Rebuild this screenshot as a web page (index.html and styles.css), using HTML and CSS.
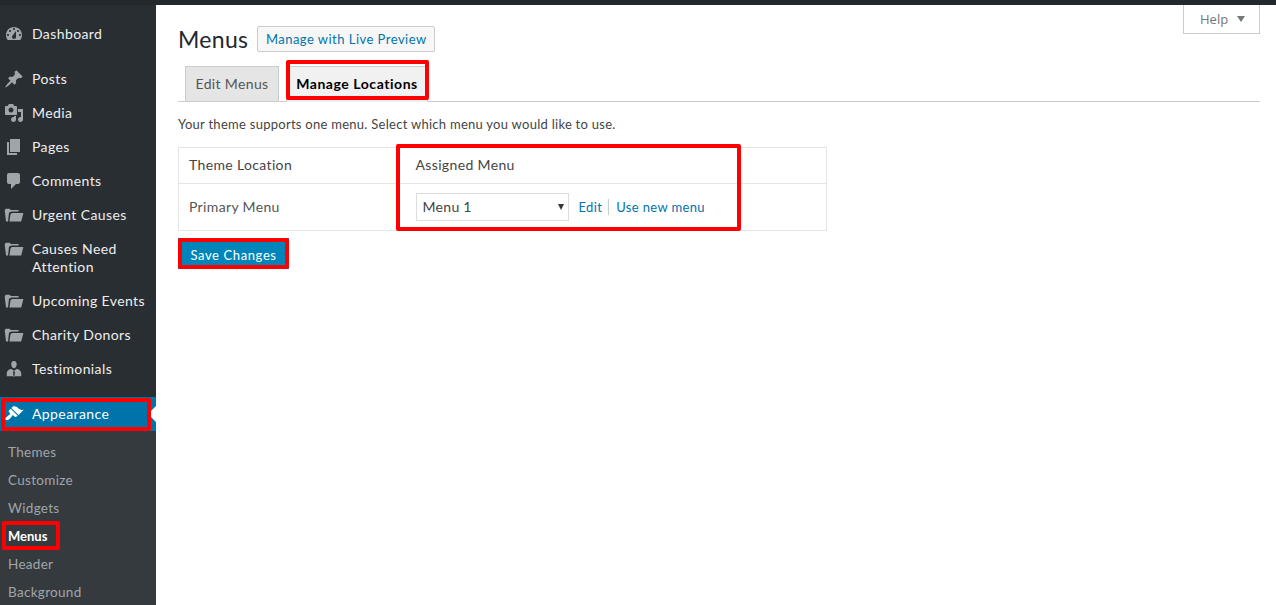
FILE: index.html
```html
<!DOCTYPE html>
<html lang="en">
<head>
<meta charset="utf-8">
<title>Menus</title>
<link rel="stylesheet" href="styles.css">
</head>
<body>
<div class="topbar"></div>
<div class="app">
  <nav class="sidebar">
    <ul class="menu">
      <li class="item"><svg class="icon" viewBox="0 0 20 20"><path d="M3.76 16h12.48c1.1-1.37 1.76-3.11 1.76-5 0-4.42-3.58-8-8-8s-8 3.58-8 8c0 1.89.66 3.63 1.76 5zM10 4c.55 0 1 .45 1 1s-.45 1-1 1-1-.45-1-1 .45-1 1-1zM6 6c.55 0 1 .45 1 1s-.45 1-1 1-1-.45-1-1 .45-1 1-1zm8 0c.55 0 1 .45 1 1s-.45 1-1 1-1-.45-1-1 .45-1 1-1zm-5.37 5.55L12 7v6c0 1.1-.9 2-2 2s-2-.9-2-2c0-.57.24-1.08.63-1.45zM4 10c.55 0 1 .45 1 1s-.45 1-1 1-1-.45-1-1 .45-1 1-1zm12 0c.55 0 1 .45 1 1s-.45 1-1 1-1-.45-1-1 .45-1 1-1z" fill-rule="evenodd"/></svg><span>Dashboard</span></li>
      <li class="sep"></li>
      <li class="item"><svg class="icon" viewBox="0 0 20 20"><path d="M10.44 3.02l1.82-1.82 6.36 6.35-1.83 1.82c-1.05-.68-2.48-.57-3.41.36l-.75.75c-.92.93-1.04 2.35-.35 3.41l-1.83 1.82-2.41-2.41-2.8 2.79c-.42.42-3.38 2.71-3.8 2.29s1.86-3.39 2.28-3.81l2.79-2.79L4.1 9.36l1.83-1.82c1.05.69 2.48.57 3.4-.36l.75-.75c.93-.92 1.05-2.35.36-3.41z"/></svg><span>Posts</span></li>
      <li class="item"><svg class="icon" viewBox="0 0 20 20"><path d="M13 11V4c0-.55-.45-1-1-1h-1.67L9 1H5L3.67 3H2c-.55 0-1 .45-1 1v7c0 .55.45 1 1 1h10c.55 0 1-.45 1-1zM7 4.5c1.38 0 2.5 1.12 2.5 2.5S8.38 9.5 7 9.5 4.5 8.38 4.5 7 5.62 4.5 7 4.5zM14 6h5v10.5c0 1.38-1.12 2.5-2.5 2.5S14 17.88 14 16.5s1.12-2.5 2.5-2.5c.17 0 .34.02.5.05V9h-3V6zm-4 8.05V13h2v3.5c0 1.38-1.12 2.5-2.5 2.5S7 17.88 7 16.5 8.12 14 9.5 14c.17 0 .34.02.5.05z" fill-rule="evenodd"/></svg><span>Media</span></li>
      <li class="item"><svg class="icon" viewBox="0 0 20 20"><path d="M6 15V2h10v13H6zm-1 1h8v2H3V5h2v11z"/></svg><span>Pages</span></li>
      <li class="item"><svg class="icon" viewBox="0 0 20 20"><path d="M5 2h9c1.1 0 2 .9 2 2v7c0 1.1-.9 2-2 2h-2l-5 5v-5H5c-1.1 0-2-.9-2-2V4c0-1.1.9-2 2-2z"/></svg><span>Comments</span></li>
      <li class="item"><svg class="icon" viewBox="0 0 20 20"><path d="M2 16.5L.8 6.5V5l1-1.2h3.6L7 5h7.6v1.6H7.4L5 7.8 4 16.5zM5.4 16.5l1.2-7.6 1.4-.9h11.4l-2.2 8.5z"/></svg><span>Urgent Causes</span></li>
      <li class="item"><svg class="icon" viewBox="0 0 20 20"><path d="M2 16.5L.8 6.5V5l1-1.2h3.6L7 5h7.6v1.6H7.4L5 7.8 4 16.5zM5.4 16.5l1.2-7.6 1.4-.9h11.4l-2.2 8.5z"/></svg><span>Causes Need<br>Attention</span></li>
      <li class="item"><svg class="icon" viewBox="0 0 20 20"><path d="M2 16.5L.8 6.5V5l1-1.2h3.6L7 5h7.6v1.6H7.4L5 7.8 4 16.5zM5.4 16.5l1.2-7.6 1.4-.9h11.4l-2.2 8.5z"/></svg><span>Upcoming Events</span></li>
      <li class="item"><svg class="icon" viewBox="0 0 20 20"><path d="M2 16.5L.8 6.5V5l1-1.2h3.6L7 5h7.6v1.6H7.4L5 7.8 4 16.5zM5.4 16.5l1.2-7.6 1.4-.9h11.4l-2.2 8.5z"/></svg><span>Charity Donors</span></li>
      <li class="item"><svg class="icon" viewBox="0 0 20 20"><path d="M10 9.25c-2.27 0-2.73-3.44-2.73-3.44C7 4.02 7.82 2 9.97 2c2.16 0 2.98 2.02 2.71 3.81 0 0-.41 3.44-2.68 3.44zm-7.24 8V14.53c0-2.25 1.94-4.48 4.47-4.48L10 11.8l-.9 1.2.5 4.9h.8l.5-4.9-.9-1.2 2.72-1.8c2.39 0 4.52 2.33 4.52 4.53v2.72H2.76z"/></svg><span>Testimonials</span></li>
      <li class="sep"></li>
      <li class="item active"><svg class="icon" viewBox="0 0 20 20"><path d="M14.48 11.06L7.41 3.99l1.5-1.5c.5-.56 2.3-.47 3.51.32 1.21.8 1.43 1.28 2.91 2.1 1.18.64 2.45 1.26 4.45.85zm-.71.71L6.7 4.7 4.93 6.47c-.39.39-.39 1.02 0 1.41l1.06 1.06c.39.39.39 1.03 0 1.42-.6.6-1.43 1.11-2.21 1.69-.35.26-.7.53-1.01.84C1.43 13.23.91 14.91 1.82 15.82c.9.9 2.59.38 3.95-.96.31-.31.58-.66.84-1.01.58-.78 1.09-1.61 1.69-2.21.39-.39 1.03-.39 1.42 0l1.06 1.06c.39.39 1.02.39 1.41 0z"/></svg><span>Appearance</span></li>
      <li class="submenu">
        <ul>
          <li class="subitem">Themes</li>
          <li class="subitem">Customize</li>
          <li class="subitem">Widgets</li>
          <li class="subitem current">Menus</li>
          <li class="subitem">Header</li>
          <li class="subitem">Background</li>
        </ul>
      </li>
    </ul>
  </nav>
  <main class="content">
    <header class="page-head">
      <h1 class="title">Menus</h1>
      <a class="preview-btn">Manage with Live Preview</a>
      <div class="help">Help <i class="caret"></i></div>
    </header>
    <div class="tabs">
      <a class="tab">Edit Menus</a>
      <a class="tab tab-active">Manage Locations</a>
    </div>
    <p class="intro">Your theme supports one menu. Select which menu you would like to use.</p>
    <table class="locations">
      <thead>
        <tr><th class="col-name">Theme Location</th><th>Assigned Menu</th></tr>
      </thead>
      <tbody>
        <tr>
          <td class="col-name">Primary Menu</td>
          <td>
            <div class="assign">
              <div class="select-wrap"><select class="menu-select"><option>Menu 1</option></select></div>
              <a class="link link-first">Edit</a>
              <a class="link">Use new menu</a>
            </div>
          </td>
        </tr>
      </tbody>
    </table>
    <button class="save">Save Changes</button>
  </main>
</div>
<div class="mark mark-appearance"></div>
<div class="mark mark-menus"></div>
<div class="mark mark-tab"></div>
<div class="mark mark-assigned"></div>
<div class="mark mark-save"></div>
</body>
</html>
```

FILE: styles.css
```css
* { box-sizing: border-box; }
html, body { margin: 0; height: 605px; overflow: hidden; background: #fff; }
body { font-family: "Lato", "Noto Sans", sans-serif; font-size: 14px; color: #444; position: relative; }
ul { list-style: none; margin: 0; padding: 0; }
.topbar { height: 5px; background: #23282d; }
.app { display: flex; height: 600px; }
.sidebar { width: 156px; flex: none; background: #292e33; padding-top: 12px; overflow: hidden; }
.item { display: flex; align-items: flex-start; gap: 8px; padding: 8px 0 8px 4px; font-size: 14px; line-height: 18px; color: #eee; letter-spacing: .4px; position: relative; }
.icon { width: 20px; height: 20px; flex: none; fill: #a0a5aa; margin: -1px 0; }
.sep { height: 11px; }
.active { background: #0073aa; color: #fff; }
.active .icon { fill: #fff; }
.active::after { content: ""; position: absolute; right: 0; top: 9px; border: 8px solid transparent; border-right-color: #fff; border-left-width: 0; }
.submenu { background: #353a3f; padding: 7px 0; }
.subitem { padding: 5px 8px; line-height: 18px; font-size: 13.5px; color: #a0a5aa; letter-spacing: .3px; }
.current { color: #fff; font-weight: 700; letter-spacing: 0; font-size: 13px; }
.content { flex: 1; padding: 0 16px 0 22px; min-width: 0; }
.page-head { display: flex; align-items: flex-start; height: 61px; }
.title { margin: 21px 0 0; font-size: 23px; font-weight: 400; line-height: 26px; color: #23282d; letter-spacing: .3px; }
.preview-btn { margin: 21px 0 0 9px; width: 178px; height: 26px; border: 1px solid #ccc; border-radius: 2px; background: #f7f7f7; color: #0073aa; font-size: 13px; line-height: 24px; text-align: center; letter-spacing: .47px; white-space: nowrap; }
.help { margin-left: auto; width: 77px; height: 29px; border: 1px solid #ccc; border-top: 0; background: #fff; font-family: "Open Sans", sans-serif; font-size: 13px; line-height: 28px; color: #72777c; padding-left: 16px; }
.caret { display: inline-block; border: 4.5px solid transparent; border-top: 6px solid #72777c; border-bottom: 0; margin-left: 5px; vertical-align: 2px; }
.tabs { display: flex; gap: 7px; padding-left: 7px; border-bottom: 1px solid #ccc; height: 36px; }
.tab { height: 36px; border: 1px solid #ccc; background: #e5e5e5; color: #555; font-size: 14px; line-height: 33px; letter-spacing: .35px; width: 94px; text-align: center; white-space: nowrap; }
.tab-active { width: 142px; background: #f1f1f1; border-bottom-color: #f1f1f1; color: #000; font-weight: 700; letter-spacing: .55px; }
.intro { margin: 13px 0 14px; font-size: 13px; line-height: 18px; color: #444; letter-spacing: .27px; }
.locations { width: 649px; border: 1px solid #e5e5e5; border-collapse: collapse; background: #fff; table-layout: fixed; }
.locations th, .locations td { text-align: left; font-weight: 400; font-size: 14px; color: #555; padding: 0 10px; letter-spacing: .35px; }
.locations th { height: 36px; padding-bottom: 2px; border-bottom: 1px solid #e5e5e5; color: #444; }
.locations td { height: 47px; }
.locations td.col-name { padding-bottom: 2px; }
.locations th:last-child, .locations td:last-child { padding-left: 11px; }
.col-name { width: 226px; }
.assign { display: flex; align-items: center; }
.select-wrap { position: relative; width: 153px; height: 28px; }
.select-wrap::after { content: ""; position: absolute; right: 5px; top: 11px; border: 3.5px solid transparent; border-top: 6px solid #32373c; border-bottom: 0; }
.menu-select { appearance: none; width: 100%; height: 100%; border: 1px solid #ddd; border-radius: 0; background: #fff; font: 14px "Lato", sans-serif; letter-spacing: .3px; color: #444; padding: 0 0 1px 6px; }
.link { color: #0073aa; font-size: 13px; line-height: 16px; padding: 0 7px; letter-spacing: .35px; }
.link-first { margin-left: 3px; border-right: 1px solid #ccc; padding-right: 6px; }
.save { display: block; margin-top: 7px; width: 111px; height: 31px; border: 0; background: #0085ba; color: #fff; font: 13px "Lato", sans-serif; letter-spacing: .62px; padding: 3px 0 0; }
.mark { position: absolute; border: 4px solid #f00; border-radius: 2px; pointer-events: none; }
.mark-appearance { left: 1px; top: 398px; width: 150px; height: 33px; }
.mark-menus { left: 2px; top: 521px; width: 58px; height: 29px; }
.mark-tab { left: 286px; top: 60px; width: 143px; height: 40px; }
.mark-assigned { left: 396px; top: 144px; width: 345px; height: 87px; }
.mark-save { left: 178px; top: 238px; width: 111px; height: 31px; }
```
